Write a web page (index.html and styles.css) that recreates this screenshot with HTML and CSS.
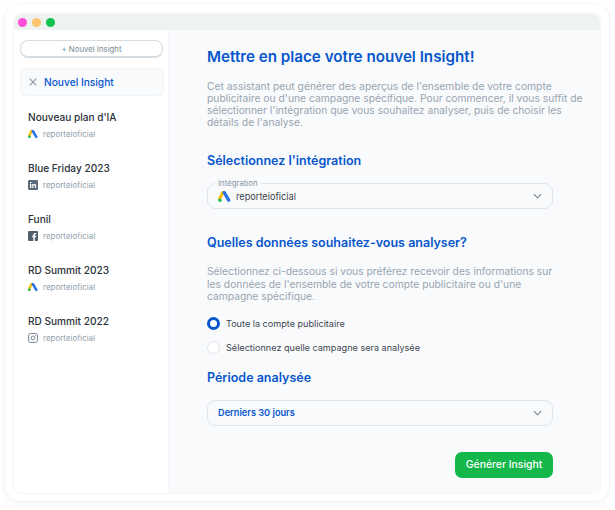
FILE: index.html
```html
<!DOCTYPE html>
<html lang="fr">
<head>
  <meta charset="UTF-8">
  <title>Nouvel Insight</title>
  <link rel="stylesheet" href="styles.css">
</head>
<body>
  <svg width="0" height="0" class="defs">
    <symbol id="ads" viewBox="0 0 14 12">
      <path d="M5.2 1.6 1.6 8.4" stroke="#fbbc04" stroke-width="3.4" stroke-linecap="round"/>
      <path d="M6.7 1.8 11.6 10" stroke="#2b74e8" stroke-width="3.6" stroke-linecap="round"/>
      <circle cx="2" cy="10" r="1.9" fill="#1db954"/>
    </symbol>
    <symbol id="chevron" viewBox="0 0 10 6">
      <path d="M1 1l4 4 4-4" fill="none" stroke="#7d8b99" stroke-width="1.3"/>
    </symbol>
  </svg>

  <div class="frame">
    <div class="window">
      <div class="titlebar">
        <span class="dot pink"></span>
        <span class="dot orange"></span>
        <span class="dot green"></span>
      </div>
      <div class="content">
        <aside class="sidebar">
          <button class="new-btn">+ Nouvel Insight</button>
          <div class="current">
            <svg class="close" width="8" height="8" viewBox="0 0 8 8"><path d="M.7.7l6.6 6.6M7.3.7.7 7.3" stroke="#8a98a6" stroke-width="1.1"/></svg>
            <span>Nouvel Insight</span>
          </div>
          <ul class="list">
            <li>
              <div class="item-name">Nouveau plan d'IA</div>
              <div class="item-account"><svg class="item-icon" viewBox="0 0 14 12"><use href="#ads"/></svg>reporteioficial</div>
            </li>
            <li>
              <div class="item-name">Blue Friday 2023</div>
              <div class="item-account">
                <svg class="item-icon" viewBox="0 0 10 10"><rect width="10" height="10" rx="1.2" fill="#5b6b79"/><path d="M2 4h1.3v4H2zM2 2h1.3v1.2H2zM4.2 4h1.2v.6c.6-.9 2.7-1 2.7 1V8H6.9V6c0-1.200-1.500-1.100-1.500 0v2H4.200z" fill="#fff"/></svg>reporteioficial
              </div>
            </li>
            <li>
              <div class="item-name">Funil</div>
              <div class="item-account">
                <svg class="item-icon" viewBox="0 0 10 10"><rect width="10" height="10" rx="1" fill="#4f5f6d"/><path d="M6.800 10V6.200H8L8.200 4.800H6.800V4c0-.5.2-.8.8-.8h.7V2c-1.900-.3-3 .3-3 1.800v1H4.200v1.400h1.100V10z" fill="#fff"/></svg>reporteioficial
              </div>
            </li>
            <li>
              <div class="item-name">RD Summit 2023</div>
              <div class="item-account"><svg class="item-icon" viewBox="0 0 14 12"><use href="#ads"/></svg>reporteioficial</div>
            </li>
            <li>
              <div class="item-name">RD Summit 2022</div>
              <div class="item-account">
                <svg class="item-icon" viewBox="0 0 10 10"><rect x=".5" y=".5" width="9" height="9" rx="2.400" fill="none" stroke="#7d8b99"/><circle cx="5" cy="5" r="2" fill="none" stroke="#7d8b99"/><circle cx="7.500" cy="2.500" r=".5" fill="#7d8b99"/></svg>reporteioficial
              </div>
            </li>
          </ul>
        </aside>

        <main class="main">
          <h1>Mettre en place votre nouvel Insight!</h1>
          <p class="intro">Cet assistant peut générer des aperçus de l'ensemble de votre compte<br>publicitaire ou d'une campagne spécifique. Pour commencer, il vous suffit de<br>sélectionner l'intégration que vous souhaitez analyser, puis de choisir les<br>détails de l'analyse.</p>

          <h2 class="h-integration">Sélectionnez l'intégration</h2>
          <div class="select with-label">
            <span class="select-label">Intégration</span>
            <svg class="select-icon" viewBox="0 0 14 12"><use href="#ads"/></svg>
            <span class="select-value">reporteioficial</span>
            <svg class="chevron" viewBox="0 0 10 6"><use href="#chevron"/></svg>
          </div>

          <h2 class="h-data">Quelles données souhaitez-vous analyser?</h2>
          <p class="hint">Sélectionnez ci-dessous si vous préférez recevoir des informations sur les données de l'ensemble de votre compte publicitaire ou d'une campagne spécifique.</p>

          <div class="radios">
            <div class="radio-row"><span class="radio on"></span>Toute la compte publicitaire</div>
            <div class="radio-row"><span class="radio"></span>Sélectionnez quelle campagne sera analysée</div>
          </div>

          <h2 class="h-period">Période analysée</h2>
          <div class="select period">
            <span class="period-value">Derniers 30 jours</span>
            <svg class="chevron" viewBox="0 0 10 6"><use href="#chevron"/></svg>
          </div>

          <div class="actions">
            <button class="generate">Générer Insight</button>
          </div>
        </main>
      </div>
    </div>
  </div>
</body>
</html>
```

FILE: styles.css
```css
* {
  margin: 0;
  padding: 0;
  box-sizing: border-box;
}

body {
  width: 615px;
  height: 510px;
  background: #fff;
  font-family: Inter, "Liberation Sans", sans-serif;
  overflow: hidden;
}

.defs {
  display: block;
  height: 0;
}

.frame {
  width: 606px;
  height: 499px;
  margin: 3px 0 0 4px;
  padding: 10px 9px 9px 9px;
  border: 1px solid #f3f5f7;
  border-top-color: #f8f9fa;
  border-radius: 16px;
  box-shadow: 0 2px 5px rgba(120, 135, 150, 0.08);
}

.window {
  height: 479px;
  display: flex;
  flex-direction: column;
  border-radius: 8px;
  overflow: hidden;
  box-shadow: 0 0 2px rgba(120, 135, 150, 0.25);
}

.titlebar {
  height: 16px;
  flex: none;
  display: flex;
  align-items: center;
  gap: 5px;
  padding-left: 4px;
  background: #eef3f2;
}

.dot {
  width: 9px;
  height: 9px;
  border-radius: 50%;
}

.pink { background: #ff4fd8; }
.orange { background: #ffc56e; }
.green { background: #12c24f; }

.content {
  flex: 1;
  display: flex;
  min-height: 0;
}

.sidebar {
  width: 155px;
  flex: none;
  padding: 10px 5px 0 6px;
  background: #fff;
  border-right: 1px solid #f5f6f9;
}

.new-btn {
  display: block;
  width: 143px;
  height: 18px;
  border: 1px solid #d5dde3;
  border-bottom-width: 2px;
  border-radius: 8px;
  background: #fff;
  color: #7b8894;
  font-family: inherit;
  font-size: 7.800px;
  font-weight: 400;
}

.current {
  display: flex;
  align-items: center;
  width: 144px;
  height: 28px;
  margin-top: 10px;
  padding-left: 8px;
  border: 1px solid #f1f4f8;
  border-radius: 6px;
  background: #f9fafc;
  color: #0756cc;
  font-size: 10.200px;
  font-weight: 500;
}

.close {
  margin-right: 7px;
}

.list {
  list-style: none;
  padding: 7px 0 0 8px;
}

.list li {
  height: 51px;
  padding-top: 7px;
}

.item-name {
  color: #2a3038;
  font-size: 10.100px;
  font-weight: 500;
  line-height: 15px;
}

.item-account {
  display: flex;
  align-items: center;
  height: 12px;
  margin-top: 2.600px;
  color: #8f9daa;
  font-size: 7.800px;
  letter-spacing: 0.1px;
}

.item-icon {
  width: 10px;
  height: 10px;
  margin-right: 5px;
  flex: none;
}

.main {
  flex: 1;
  min-width: 0;
  padding: 17px 47px 0 38px;
  background: #f9fafc;
}

h1 {
  color: #0756cc;
  font-size: 15.200px;
  font-weight: 600;
  line-height: 20px;
}

h2 {
  color: #0756cc;
  font-size: 12.500px;
  font-weight: 600;
  line-height: 16px;
}

.intro,
.hint {
  color: #98a5b1;
  font-size: 10.300px;
  line-height: 12px;
}

.intro {
  margin-top: 13px;
  white-space: nowrap;
}

.hint {
  margin-top: 14px;
  line-height: 12.500px;
}

.h-integration {
  margin-top: 25px;
}

.select {
  position: relative;
  display: flex;
  align-items: center;
  height: 26px;
  padding: 0 10px;
  border: 1px solid #e1e5ea;
  border-radius: 8px;
}

.with-label {
  margin-top: 14px;
}

.select-label {
  position: absolute;
  top: -6px;
  left: 7px;
  padding: 0 3px;
  background: #f9fafc;
  color: #8795a3;
  font-size: 7.800px;
  line-height: 10px;
}

.select-icon {
  width: 13px;
  height: 11px;
  margin-right: 5px;
}

.select-value {
  color: #3c444d;
  font-size: 9.200px;
}

.chevron {
  width: 9px;
  height: 6px;
  margin-left: auto;
}

.h-data {
  margin-top: 26px;
}

.radios {
  margin-top: 9px;
}

.radio-row {
  display: flex;
  align-items: center;
  height: 24px;
  color: #3f4750;
  font-size: 9.100px;
}

.radio {
  width: 13px;
  height: 13px;
  margin-right: 6px;
  border: 1px solid #dfe3e8;
  border-radius: 50%;
  background: #fff;
}

.radio.on {
  border: 3px solid #0756cc;
}

.h-period {
  margin-top: 10px;
}

.period {
  margin-top: 14px;
}

.period-value {
  color: #0756cc;
  font-size: 9.200px;
  font-weight: 600;
}

.actions {
  display: flex;
  justify-content: flex-end;
  margin-top: 26px;
}

.generate {
  width: 98px;
  height: 26px;
  border: none;
  border-radius: 7px;
  background: #14b84a;
  color: #fff;
  font-family: inherit;
  font-size: 10.400px;
  font-weight: 500;
}
```
